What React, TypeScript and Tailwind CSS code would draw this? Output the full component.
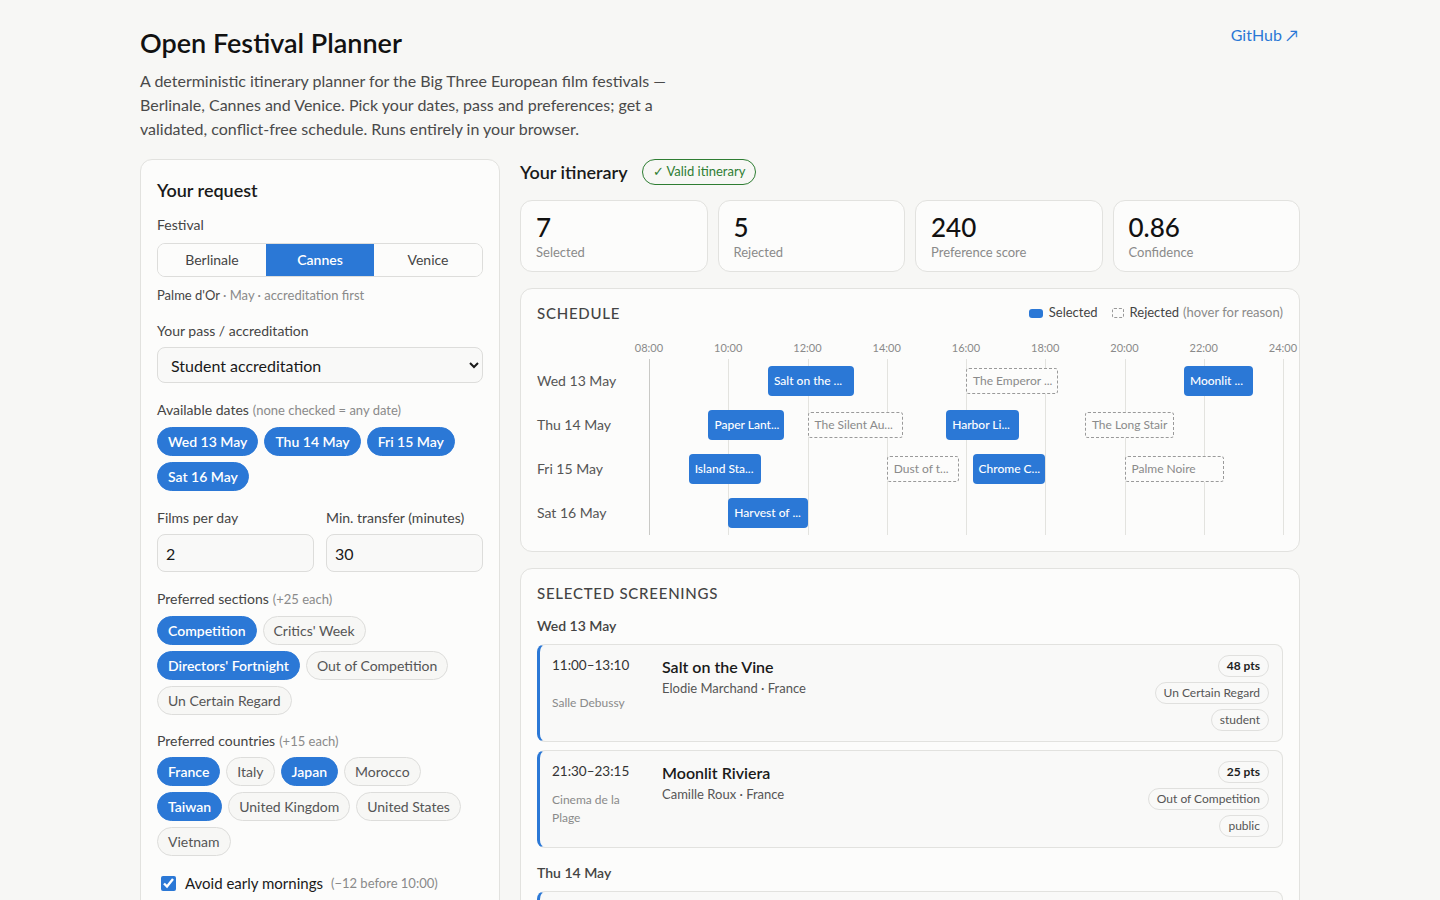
import { useState } from "react";

type Block = { title: string; short: string; start: string; end: string; picked: boolean };

const days: { label: string; blocks: Block[] }[] = [
  {
    label: "Wed 13 May",
    blocks: [
      { title: "Salt on the Vine", short: "Salt on the ...", start: "11:00", end: "13:10", picked: true },
      { title: "The Emperor of Rain", short: "The Emperor ...", start: "16:00", end: "18:20", picked: false },
      { title: "Moonlit Riviera", short: "Moonlit ...", start: "21:30", end: "23:15", picked: true },
    ],
  },
  {
    label: "Thu 14 May",
    blocks: [
      { title: "Paper Lanterns", short: "Paper Lant...", start: "09:30", end: "11:25", picked: true },
      { title: "The Silent Audience", short: "The Silent Au...", start: "12:00", end: "14:25", picked: false },
      { title: "Harbor Lights", short: "Harbor Li...", start: "15:30", end: "17:20", picked: true },
      { title: "The Long Stair", short: "The Long Stair", start: "19:00", end: "21:15", picked: false },
    ],
  },
  {
    label: "Fri 15 May",
    blocks: [
      { title: "Island Stations", short: "Island Sta...", start: "09:00", end: "10:50", picked: true },
      { title: "Dust of the Road", short: "Dust of t...", start: "14:00", end: "15:50", picked: false },
      { title: "Chrome Canyon", short: "Chrome C...", start: "16:10", end: "18:00", picked: true },
      { title: "Palme Noire", short: "Palme Noire", start: "20:00", end: "22:30", picked: false },
    ],
  },
  {
    label: "Sat 16 May",
    blocks: [{ title: "Harvest of Ashes", short: "Harvest of ...", start: "10:00", end: "12:00", picked: true }],
  },
];

const hours = ["08:00", "10:00", "12:00", "14:00", "16:00", "18:00", "20:00", "22:00", "24:00"];

const screenings = [
  {
    day: "Wed 13 May",
    items: [
      {
        time: "11:00–13:10",
        venue: "Salle Debussy",
        title: "Salt on the Vine",
        by: "Elodie Marchand · France",
        pts: 48,
        section: "Un Certain Regard",
        pass: "student",
      },
      {
        time: "21:30–23:15",
        venue: "Cinema de la Plage",
        title: "Moonlit Riviera",
        by: "Camille Roux · France",
        pts: 25,
        section: "Out of Competition",
        pass: "public",
      },
    ],
  },
  {
    day: "Thu 14 May",
    items: [
      {
        time: "09:30–11:25",
        venue: "Salle Bazin",
        title: "Paper Lanterns",
        by: "Lin Yu-ting · Taiwan",
        pts: 55,
        section: "Directors' Fortnight",
        pass: "student",
      },
    ],
  },
];

// minutes past 08:00 as a share of the 16 hour axis
const pos = (t: string) => {
  const [h, m] = t.split(":").map(Number);
  return ((h - 8) * 60 + m) / (16 * 60);
};

function Chip({ label, on }: { label: string; on?: boolean }) {
  return (
    <button
      type="button"
      className={
        on
          ? "h-[29px] rounded-full border border-[#2b78d6] bg-[#2b78d6] px-[10px] text-sm font-semibold text-white"
          : "h-[29px] rounded-full border border-[#dddddb] bg-[#f7f7f5] px-[10px] text-sm text-[#555]"
      }
    >
      {label}
    </button>
  );
}

function Label({ text, hint }: { text: string; hint?: string }) {
  return (
    <div className="text-sm leading-5 text-[#444]">
      {text}
      {hint && <span className="ml-1 text-[13px] text-[#8a8a8a]">{hint}</span>}
    </div>
  );
}

function Pill({ children, strong }: { children: React.ReactNode; strong?: boolean }) {
  return (
    <span
      className={
        strong
          ? "flex h-[22px] items-center rounded-full border border-[#e0e0de] bg-[#f9f9f8] px-2 text-xs font-bold text-[#1f1f1f]"
          : "flex h-[22px] items-center rounded-full border border-[#e0e0de] bg-[#f9f9f8] px-2 text-xs text-[#555]"
      }
    >
      {children}
    </span>
  );
}

function RequestForm() {
  const [festival, setFestival] = useState("Cannes");

  return (
    <aside className="rounded-xl border border-[#e2e2df] bg-[#fcfcfb] px-4 pt-4 pb-6">
      <h2 className="text-lg leading-7 font-semibold text-[#1a1a1a]">Your request</h2>

      <div className="mt-[11px]">
        <Label text="Festival" />
        <div className="mt-2 grid h-[34px] grid-cols-3 overflow-hidden rounded-lg border border-[#dddddb]">
          {["Berlinale", "Cannes", "Venice"].map((f) => (
            <button
              key={f}
              type="button"
              onClick={() => setFestival(f)}
              className={
                f === festival
                  ? "bg-[#2b78d6] text-sm font-semibold text-white"
                  : "bg-[#fcfcfb] text-sm text-[#444]"
              }
            >
              {f}
            </button>
          ))}
        </div>
        <div className="mt-2 text-[13px] leading-5 text-[#8a8a8a]">
          <span className="text-[#444]">Palme d'Or</span> · May · accreditation first
        </div>
      </div>

      <div className="mt-4">
        <Label text="Your pass / accreditation" />
        <select
          defaultValue="student"
          className="mt-1.5 h-9 w-full rounded-lg border border-[#dddddb] bg-[#f9f9f8] pr-3 pl-[9px] text-base text-[#1a1a1a]"
        >
          <option value="public">Public ticket</option>
          <option value="student">Student accreditation</option>
          <option value="press">Press accreditation</option>
        </select>
      </div>

      <div className="mt-[17px]">
        <Label text="Available dates" hint="(none checked = any date)" />
        <div className="mt-[7px] flex flex-wrap gap-x-1.5 gap-y-1.5">
          {["Wed 13 May", "Thu 14 May", "Fri 15 May", "Sat 16 May"].map((d) => (
            <Chip key={d} label={d} on />
          ))}
        </div>
      </div>

      <div className="mt-[17px] grid grid-cols-2 gap-3">
        <div>
          <Label text="Films per day" />
          <input
            type="number"
            defaultValue={2}
            className="mt-1.5 h-[38px] w-full rounded-lg border border-[#dddddb] bg-[#f9f9f8] pr-2.5 pl-[8px] text-base text-[#1a1a1a]"
          />
        </div>
        <div>
          <Label text="Min. transfer (minutes)" />
          <input
            type="number"
            defaultValue={30}
            className="mt-1.5 h-[38px] w-full rounded-lg border border-[#dddddb] bg-[#f9f9f8] pr-2.5 pl-[8px] text-base text-[#1a1a1a]"
          />
        </div>
      </div>

      <div className="mt-[17px]">
        <Label text="Preferred sections" hint="(+25 each)" />
        <div className="mt-[7px] flex flex-wrap gap-x-1.5 gap-y-1.5">
          <Chip label="Competition" on />
          <Chip label="Critics' Week" />
          <Chip label="Directors' Fortnight" on />
          <Chip label="Out of Competition" />
          <Chip label="Un Certain Regard" />
        </div>
      </div>

      <div className="mt-[16px]">
        <Label text="Preferred countries" hint="(+15 each)" />
        <div className="mt-[6px] flex flex-wrap gap-x-1.5 gap-y-1.5">
          <Chip label="France" on />
          <Chip label="Italy" />
          <Chip label="Japan" on />
          <Chip label="Morocco" />
          <Chip label="Taiwan" on />
          <Chip label="United Kingdom" />
          <Chip label="United States" />
          <Chip label="Vietnam" />
        </div>
      </div>

      <label className="mt-[16px] flex items-center pl-1">
        <input type="checkbox" defaultChecked className="h-[15px] w-[15px] accent-[#2b78d6]" />
        <span className="ml-[9px] text-[15px] text-[#1a1a1a]">Avoid early mornings</span>
        <span className="ml-2 text-[13px] text-[#8a8a8a]">(−12 before 10:00)</span>
      </label>
    </aside>
  );
}

function Schedule() {
  return (
    <section className="rounded-xl border border-[#e2e2df] bg-[#fcfcfb] px-4 pt-[14px] pb-4">
      <div className="flex items-center justify-between">
        <h3 className="text-[15px] leading-5 font-medium tracking-[0.05em] text-[#444] uppercase">Schedule</h3>
        <div className="flex items-center text-[13px] text-[#444]">
          <span className="h-[9px] w-[14px] rounded-[3px] bg-[#2b78d6]" />
          <span className="ml-1.5">Selected</span>
          <span className="ml-[14px] h-[10px] w-3 rounded-[2px] border border-dashed border-[#999]" />
          <span className="ml-1.5">Rejected</span>
          <span className="ml-1 text-[13px] text-[#8a8a8a]">(hover for reason)</span>
        </div>
      </div>

      <div className="mt-[17px]">
        <div className="relative ml-[112px] h-4">
          {hours.map((h, i) => (
            <span
              key={h}
              className="absolute top-0 -translate-x-1/2 text-[11px] leading-4 text-[#8a8a8a]"
              style={{ left: `${(i / 8) * 100}%` }}
            >
              {h}
            </span>
          ))}
        </div>

        <div className="relative mt-[3px]">
          <div className="absolute inset-y-0 right-0 left-[112px]">
            {hours.map((h, i) => (
              <span
                key={h}
                className={i === 0 ? "absolute inset-y-0 w-px bg-[#c9c9c6]" : "absolute inset-y-0 w-px bg-[#e3e3df]"}
                style={{ left: `${(i / 8) * 100}%` }}
              />
            ))}
          </div>

          {days.map((d) => (
            <div key={d.label} className="flex h-11 items-center">
              <div className="w-[112px] shrink-0 text-sm text-[#555]">{d.label}</div>
              <div className="relative h-full flex-1">
                {d.blocks.map((b) => {
                  const left = pos(b.start);
                  const width = pos(b.end) - left;
                  return (
                    <div
                      key={b.title}
                      title={b.title}
                      className={
                        b.picked
                          ? "absolute top-1/2 flex h-[30px] -translate-y-1/2 items-center overflow-hidden rounded-[4px] bg-[#2b78d6] px-1.5 text-xs font-medium whitespace-nowrap text-white"
                          : "absolute top-1/2 flex h-[26px] -translate-y-1/2 items-center overflow-hidden rounded-[3px] border border-dashed border-[#9a9a9a] bg-[#fcfcfb] px-1.5 text-xs whitespace-nowrap text-[#8a8a8a]"
                      }
                      style={{ left: `${left * 100}%`, width: `${width * 100}%` }}
                    >
                      {b.short}
                    </div>
                  );
                })}
              </div>
            </div>
          ))}
        </div>
      </div>
    </section>
  );
}

function SelectedScreenings() {
  return (
    <section className="rounded-xl border border-[#e2e2df] bg-[#fcfcfb] px-4 pt-[14px] pb-4">
      <h3 className="text-[15px] leading-5 font-medium tracking-[0.05em] text-[#444] uppercase">Selected screenings</h3>
      {screenings.map((g, gi) => (
        <div key={g.day} className={gi === 0 ? "mt-[13px]" : "mt-[15px]"}>
          <div className="text-sm leading-5 font-semibold text-[#444]">{g.day}</div>
          <div className="mt-2 flex flex-col gap-2">
            {g.items.map((s) => (
              <div
                key={s.title}
                className="flex rounded-lg border border-l-[3px] border-[#e2e2df] border-l-[#2b78d6] bg-[#f9f9f8] pt-[10px] pr-[13px] pb-[10px] pl-3"
              >
                <div className="flex w-[90px] shrink-0 flex-col">
                  <div className="text-[13.5px] leading-5 text-[#333]">{s.time}</div>
                  <div className="my-auto text-xs leading-[18px] text-[#8a8a8a]">{s.venue}</div>
                </div>
                <div className="ml-5 flex-1">
                  <div className="text-base leading-6 font-semibold text-[#1a1a1a]">{s.title}</div>
                  <div className="text-[13px] leading-[18px] text-[#555]">{s.by}</div>
                </div>
                <div className="flex flex-col items-end gap-[5px]">
                  <Pill strong>{s.pts} pts</Pill>
                  <Pill>{s.section}</Pill>
                  <Pill>{s.pass}</Pill>
                </div>
              </div>
            ))}
          </div>
        </div>
      ))}
    </section>
  );
}

export default function App() {
  const stats = [
    { value: "7", label: "Selected" },
    { value: "5", label: "Rejected" },
    { value: "240", label: "Preference score" },
    { value: "0.86", label: "Confidence" },
  ];

  return (
    <div className="min-h-screen bg-[#f7f7f5] font-['Lato',sans-serif] text-[#1a1a1a]">
      <div className="mx-auto max-w-[1160px] pt-[25px] pb-10">
        <header className="flex items-start justify-between">
          <div>
            <h1 className="text-[27px] leading-9 font-semibold text-[#111]">Open Festival Planner</h1>
            <p className="mt-2 max-w-[545px] text-base leading-6 text-[#4a4a4a]">
              A deterministic itinerary planner for the Big Three European film festivals — Berlinale, Cannes and
              Venice. Pick your dates, pass and preferences; get a validated, conflict-free schedule. Runs entirely in
              your browser.
            </p>
          </div>
          <a href="#" className="-mt-0.5 mr-0.5 text-base text-[#2b78d6]">
            GitHub ↗
          </a>
        </header>

        <div className="mt-[18px] grid grid-cols-[360px_1fr] items-start gap-5">
          <RequestForm />

          <main className="flex flex-col">
            <div className="flex h-[26px] items-center">
              <h2 className="text-lg font-semibold text-[#1a1a1a]">Your itinerary</h2>
              <span className="ml-3.5 flex h-[26px] items-center rounded-full border border-[#2e7d32] px-2.5 text-[13px] text-[#2e7d32]">
                ✓ Valid itinerary
              </span>
            </div>

            <div className="mt-[15px] grid grid-cols-4 gap-[10px]">
              {stats.map((s) => (
                <div key={s.label} className="rounded-xl border border-[#e2e2df] bg-[#fcfcfb] px-[15px] py-[10px]">
                  <div className="text-[26px] leading-8 font-medium text-[#111]">{s.value}</div>
                  <div className="text-[13px] leading-[18px] text-[#8a8a8a]">{s.label}</div>
                </div>
              ))}
            </div>

            <div className="mt-4">
              <Schedule />
            </div>
            <div className="mt-4">
              <SelectedScreenings />
            </div>
          </main>
        </div>
      </div>
    </div>
  );
}
